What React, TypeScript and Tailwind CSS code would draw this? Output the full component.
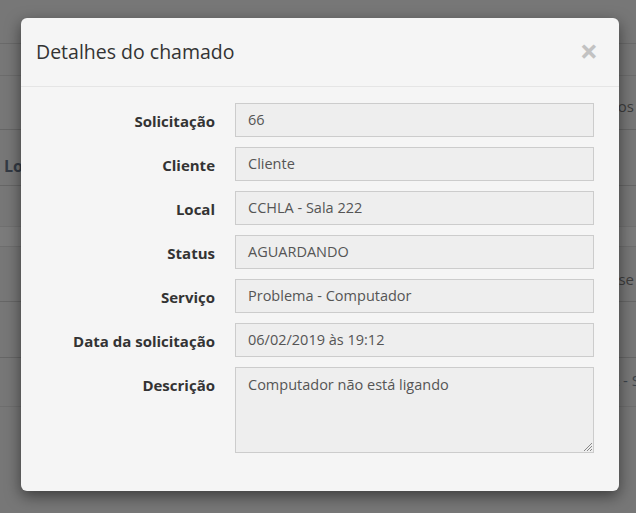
import React from 'react';

const fields = [
  { label: 'Solicitação', value: '66' },
  { label: 'Cliente', value: 'Cliente' },
  { label: 'Local', value: 'CCHLA - Sala 222' },
  { label: 'Status', value: 'AGUARDANDO' },
  { label: 'Serviço', value: 'Problema - Computador' },
  { label: 'Data da solicitação', value: '06/02/2019 às 19:12' },
];

// underlying page rows (dimmed by the backdrop)
const bgRows = [
  { h: 'h-[44px]', text: '', cls: 'border-[#6a6a6a]' },
  { h: 'h-[32px]', text: '', cls: 'border-[#6c6c6c]' },
  { h: 'h-[54px]', text: 'Meus chamados', cls: 'border-[#666666] pt-[8px]', right: true },
  { h: 'h-[56px]', text: 'Lo', cls: 'border-[#666666] pt-[16px]', left: true },
  { h: 'h-[41px]', text: '', cls: 'border-[#707070]' },
  { h: 'h-[20px]', text: '', cls: 'border-[#6e6e6e] bg-[#7b7b7b]' },
  { h: 'h-[55px]', text: 'Em análise', cls: 'border-[#666666] pt-[10px]', right: true },
  { h: 'h-[56px]', text: '', cls: 'border-[#666666]' },
  { h: 'h-[49px]', text: 'CCHLA - S', cls: 'border-[#6e6e6e] pb-[4px]', far: true },
];

export default function App() {
  return (
    <div className="relative w-[636px] h-[513px] overflow-hidden bg-[#777777] font-['Open_Sans',sans-serif]">
      {/* page behind the backdrop */}
      <div className="flex flex-col">
        {bgRows.map((r, i) => (
          <div key={i} className={`${r.h} border-b ${r.cls} flex items-center text-[15px] text-[#3a3a3a] whitespace-nowrap`}>
            {r.left && <span className="pl-[4px] text-[16px] font-bold text-[#333a44]">{r.text}</span>}
            {r.right && <span className="ml-auto pr-[2px] text-[#3d3d3d]">{r.text}</span>}
            {r.far && <span className="ml-auto mr-[-4px] text-[#3d444c]">{r.text}</span>}
          </div>
        ))}
      </div>

      {/* modal */}
      <div className="absolute left-[21px] top-[18px] w-[598px] h-[473px] rounded-[6px] bg-[#f5f5f5] shadow-[0_5px_15px_rgba(0,0,0,0.5)]">
        <div className="flex items-center justify-between h-[69px] px-[15px] border-b border-[#e5e5e5]">
          <h4 className="text-[19.5px] text-[#333333] leading-none">Detalhes do chamado</h4>
          <span className="mr-[6px] mb-[3px] text-[32px] font-bold leading-none text-[#c2c2c2]">×</span>
        </div>
        <div className="flex flex-col gap-[10px] pt-[16px] pl-[15px] pr-[25px]">
          {fields.map(f => (
            <div key={f.label} className="flex items-start">
              <label className="w-[179px] pt-[7px] text-right text-[15px] font-bold text-[#333333] leading-[22px]">{f.label}</label>
              <div className="ml-[20px] flex-1 h-[34px] flex items-center px-[12px] bg-[#eeeeee] border border-[#cccccc] text-[14.5px] text-[#555555]">
                {f.value}
              </div>
            </div>
          ))}
          <div className="flex items-start">
            <label className="w-[179px] pt-[7px] text-right text-[15px] font-bold text-[#333333] leading-[22px]">Descrição</label>
            <div className="relative ml-[20px] flex-1 h-[86px] px-[12px] py-[6px] bg-[#eeeeee] border border-[#cccccc] text-[14.5px] text-[#555555] leading-[22px]">
              Computador não está ligando
              <svg className="absolute right-[1px] bottom-[1px]" width="9" height="9" viewBox="0 0 9 9">
                <path d="M9 1 L1 9 M9 4 L4 9 M9 7 L7 9" stroke="#888" strokeWidth="1" />
              </svg>
            </div>
          </div>
        </div>
      </div>
    </div>
  );
}
